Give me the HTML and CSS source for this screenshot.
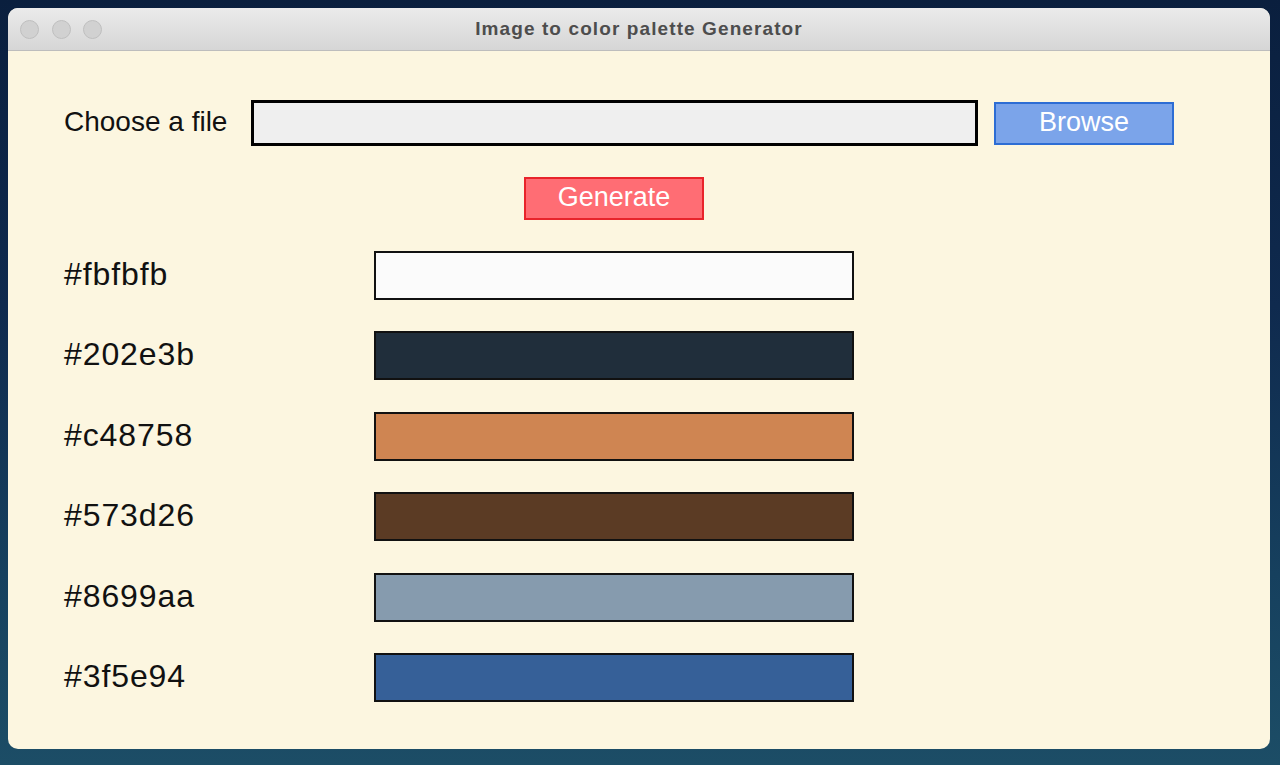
FILE: index.html
```html
<!DOCTYPE html>
<html>
<head>
<meta charset="utf-8">
<title>Image to color palette Generator</title>
<link rel="stylesheet" href="styles.css">
</head>
<body>
<div class="desktop">
  <div class="window">
    <div class="titlebar">
      <div class="lights">
        <span class="light"></span>
        <span class="light"></span>
        <span class="light"></span>
      </div>
      <div class="title">Image to color palette Generator</div>
    </div>
    <div class="content">
      <div class="file-row">
        <label class="file-label">Choose a file</label>
        <div class="file-input"></div>
        <button class="btn browse">Browse</button>
      </div>
      <div class="gen-row">
        <button class="btn generate">Generate</button>
      </div>
      <div class="palette">
        <div class="swatch-row"><span class="hex">#fbfbfb</span><span class="swatch" style="background:#fbfbfb"></span></div>
        <div class="swatch-row"><span class="hex">#202e3b</span><span class="swatch" style="background:#202e3b"></span></div>
        <div class="swatch-row"><span class="hex">#c48758</span><span class="swatch" style="background:#cf8552"></span></div>
        <div class="swatch-row"><span class="hex">#573d26</span><span class="swatch" style="background:#5b3b24"></span></div>
        <div class="swatch-row"><span class="hex">#8699aa</span><span class="swatch" style="background:#869bae"></span></div>
        <div class="swatch-row"><span class="hex">#3f5e94</span><span class="swatch" style="background:#366098"></span></div>
      </div>
    </div>
  </div>
</div>
</body>
</html>
```

FILE: styles.css
```css
html, body {
  margin: 0;
  padding: 0;
}
body {
  width: 1280px;
  height: 765px;
  overflow: hidden;
  font-family: "Liberation Sans", Arial, sans-serif;
}
.desktop {
  width: 1280px;
  height: 765px;
  padding: 8px 0 0 8px;
  box-sizing: border-box;
  background: linear-gradient(180deg, #0a1f3e 0%, #0f2a4e 40%, #16405e 75%, #1c4d66 100%);
}
.window {
  width: 1262px;
  height: 741px;
  border-radius: 10px;
  overflow: hidden;
  background: #fcf6e0;
  display: flex;
  flex-direction: column;
}
.titlebar {
  height: 42px;
  flex: none;
  border-bottom: 1px solid #bdbdbd;
  background: linear-gradient(180deg, #ebebeb 0%, #d6d6d6 100%);
  position: relative;
  display: flex;
  align-items: center;
  justify-content: center;
}
.lights {
  position: absolute;
  left: 12px;
  top: 12px;
  display: flex;
  gap: 12.5px;
}
.light {
  width: 19px;
  height: 19px;
  border-radius: 50%;
  background: #d1d1d1;
  border: 1px solid #bfbfbf;
  box-sizing: border-box;
  display: block;
}
.title {
  font-weight: bold;
  font-size: 19px;
  letter-spacing: 1.1px;
  color: #4d4d4d;
  margin-left: 0;
}
.content {
  padding: 49px 0 0 56px;
  display: flex;
  flex-direction: column;
}
.file-row {
  display: flex;
  align-items: center;
  height: 46px;
}
.file-label {
  font-size: 28px;
  color: #111;
  width: 187px;
  padding-bottom: 2px;
}
.file-input {
  width: 727px;
  height: 46px;
  box-sizing: border-box;
  border: 3px solid #000;
  background: #efefef;
}
.btn {
  font-family: "Liberation Sans", Arial, sans-serif;
  font-size: 27px;
  color: #fff;
  height: 43px;
  width: 180px;
  padding: 0 0 2px 0;
  box-sizing: border-box;
  cursor: pointer;
}
.browse {
  margin-left: 16px;
  background: #7ba4ea;
  border: 2px solid #2d6dd4;
}
.gen-row {
  display: flex;
  padding-left: 460px;
  margin-top: 31px;
}
.generate {
  background: #ff6d74;
  border: 2px solid #e8242b;
}
.palette {
  display: flex;
  flex-direction: column;
  gap: 31.4px;
  margin-top: 31px;
}
.swatch-row {
  display: flex;
  align-items: center;
  height: 49px;
}
.hex {
  width: 310px;
  font-size: 32px;
  letter-spacing: 0.9px;
  color: #111;
  padding-bottom: 2px;
}
.swatch {
  display: block;
  width: 480px;
  height: 49px;
  box-sizing: border-box;
  border: 2px solid #111;
}
```
